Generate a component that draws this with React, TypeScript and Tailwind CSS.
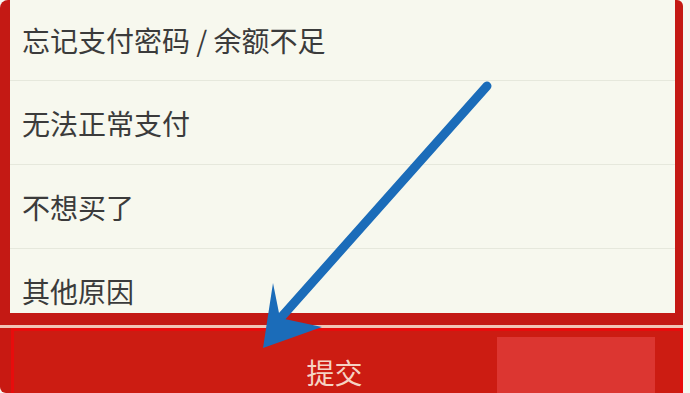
import React from "react";

const rows = ["忘记支付密码 / 余额不足", "无法正常支付", "不想买了", "其他原因"];

export default function App() {
  return (
    <div
      className="relative w-[690px] h-[393px] overflow-hidden bg-[#f6f7f1]"
      style={{ fontFamily: '"Noto Sans CJK SC", "Noto Sans", sans-serif' }}
    >
      <div className="w-[683px] mt-[3px] bg-[#c41914] rounded-tl-[8px] rounded-tr-[6px] pl-[10px] pr-[8px] pb-[12px]">
        <div className="-mt-[3px] h-[313px] bg-[#f7f8ee] overflow-hidden flex flex-col">
          {rows.map((r, i) => (
            <div
              key={r}
              className={`${i === 0 ? "h-[81px]" : "h-[84px]"} shrink-0 flex items-center pl-[12px] border-b border-[#e6e8dc] text-[28px] text-[#3b3b3b] leading-none`}
            >
              {r}
            </div>
          ))}
        </div>
      </div>
      <div className="w-[683px] h-[3px] bg-[#f1c4b6]" />
      <div className="w-[683px] h-[65px] bg-[#c81912] pl-[11px] rounded-bl-[6px] rounded-br-[4px] flex">
        <div className="relative flex-1 border-t-[3px] border-l-[3px] border-r-[3px] border-[#e80c0c] bg-[#cc1c12] flex items-center justify-center">
          <div className="absolute left-[483px] top-[6px] w-[158px] bottom-0 bg-[#dc3631]" />
          <span className="relative text-[28px] text-[#f5d3c4] leading-none mr-[25px] mt-[20px]">提交</span>
        </div>
      </div>
      <svg className="absolute left-0 top-0" width="690" height="393" viewBox="0 0 690 393">
        <line x1="487" y1="86" x2="277" y2="322" stroke="#1b6cb9" strokeWidth="9" strokeLinecap="round" />
        <polygon points="273,283 280,318 322,327 263,348" fill="#1b6cb9" />
      </svg>
    </div>
  );
}
